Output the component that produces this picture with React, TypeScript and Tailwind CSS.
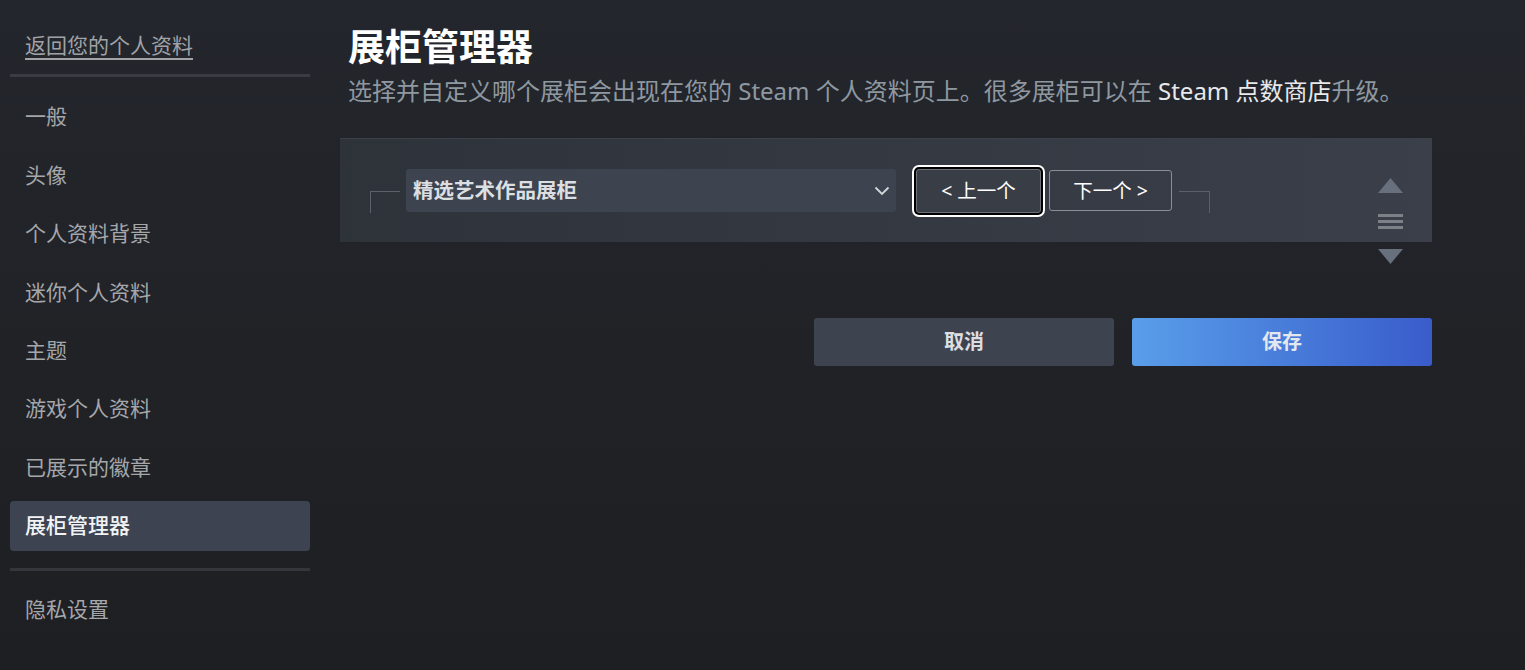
import React from "react";

const navItems = ["一般", "头像", "个人资料背景", "迷你个人资料", "主题", "游戏个人资料", "已展示的徽章"];

export default function App() {
  return (
    <div className="min-h-[670px] w-full bg-linear-to-b from-[#23262c] to-[#1e1f22] font-[family-name:Noto_Sans,Noto_Sans_CJK_SC,sans-serif] flex pl-[10px]">
      {/* Sidebar */}
      <aside className="w-[300px] shrink-0 pt-[30px] flex flex-col">
        <a className="px-[15px] h-[30px] leading-[30px] text-[21px] text-[#a0a2a6] underline underline-offset-[5px] decoration-[2px] cursor-pointer">
          返回您的个人资料
        </a>
        <div className="mt-[14px] h-[3px] bg-[#393c43]" />
        <nav className="mt-[15px] flex flex-col gap-[8.45px]">
          {navItems.map((t) => (
            <div key={t} className="h-[50px] flex items-center px-[15px] text-[21px] text-[#a5a7ab]">
              {t}
            </div>
          ))}
          <div className="h-[50px] flex items-center px-[15px] text-[21px] font-medium text-[#f2f3f4] bg-[#3d4350] rounded-[4px]">
            展柜管理器
          </div>
        </nav>
        <div className="mt-[17px] h-[3px] bg-[#34363b]" />
        <div className="mt-[13.5px] h-[50px] flex items-center px-[15px] text-[21px] text-[#a5a7ab]">隐私设置</div>
      </aside>

      {/* Main */}
      <main className="ml-[30px] w-[1092px] shrink-0 pt-[25px] flex flex-col">
        <h1 className="pl-[8px] text-[37px] leading-[44px] font-bold text-white">展柜管理器</h1>
        <p className="pl-[8px] mt-[6px] text-[24px] leading-[32px] text-[#8f98a0] whitespace-nowrap">
          选择并自定义哪个展柜会出现在您的 Steam 个人资料页上。很多展柜可以在 <span className="text-[#e8e9ea]">Steam 点数商店</span>升级。
        </p>

        {/* Showcase panel */}
        <div className="relative mt-[31px] h-[104px] bg-linear-to-r from-[#2e3239] to-[#3b3f4a] border-t border-[#3c4049] flex items-center px-[30px]">
          <div className="h-[44px] w-[30px] flex flex-col justify-end">
            <div className="h-[22px] border-t border-l border-[#5b606b]" />
          </div>
          <div className="ml-[6px] w-[490px] h-[43px] bg-[#3d4450] rounded-[3px] flex items-center justify-between pl-[7px] pr-[6px]">
            <span className="text-[20.5px] font-bold text-[#dcdfe2]">精选艺术作品展柜</span>
            <svg width="16" height="10" viewBox="0 0 16 10" fill="none">
              <polyline points="1.5,1.5 8,8 14.5,1.5" stroke="#d4d6d9" strokeWidth="1.8" />
            </svg>
          </div>
          <button className="ml-[20px] w-[125px] h-[44px] rounded-[3px] border border-[#6c7079] bg-[#393d46] text-[19.5px] text-white shadow-[0_0_0_2px_#000,0_0_0_4px_#fff] flex items-center justify-center">
            &lt; 上一个
          </button>
          <button className="ml-[8px] w-[123px] h-[41px] rounded-[3px] border border-[#8a8e96] text-[19.5px] text-white flex items-center justify-center">
            下一个 &gt;
          </button>
          <div className="ml-[7px] h-[44px] w-[31px] flex flex-col justify-end">
            <div className="h-[22px] border-t border-r border-[#5b606b]" />
          </div>

          {/* Reorder controls */}
          <div className="absolute right-[29px] top-[39px] w-[25px] flex flex-col items-center">
            <svg width="25" height="15" viewBox="0 0 25 15">
              <polygon points="12.5,0 25,15 0,15" fill="#67707c" />
            </svg>
            <div className="mt-[21px] flex flex-col gap-[3px] w-[25px]">
              <div className="h-[3px] bg-[#7d8087]" />
              <div className="h-[3px] bg-[#7d8087]" />
              <div className="h-[3px] bg-[#7d8087]" />
            </div>
            <svg className="mt-[20px]" width="25" height="15" viewBox="0 0 25 15">
              <polygon points="0,0 25,0 12.5,15" fill="#67707c" />
            </svg>
          </div>
        </div>

        {/* Action buttons */}
        <div className="mt-[76px] flex justify-end gap-[18px]">
          <button className="w-[300px] h-[48px] rounded-[3px] bg-[#3d4450] text-[20px] font-bold text-[#dcdee1]">取消</button>
          <button className="w-[300px] h-[48px] rounded-[3px] bg-linear-to-r from-[#5a9ee9] to-[#3a5ccb] text-[20px] font-bold text-[#e3e8ee]">保存</button>
        </div>
      </main>
    </div>
  );
}
